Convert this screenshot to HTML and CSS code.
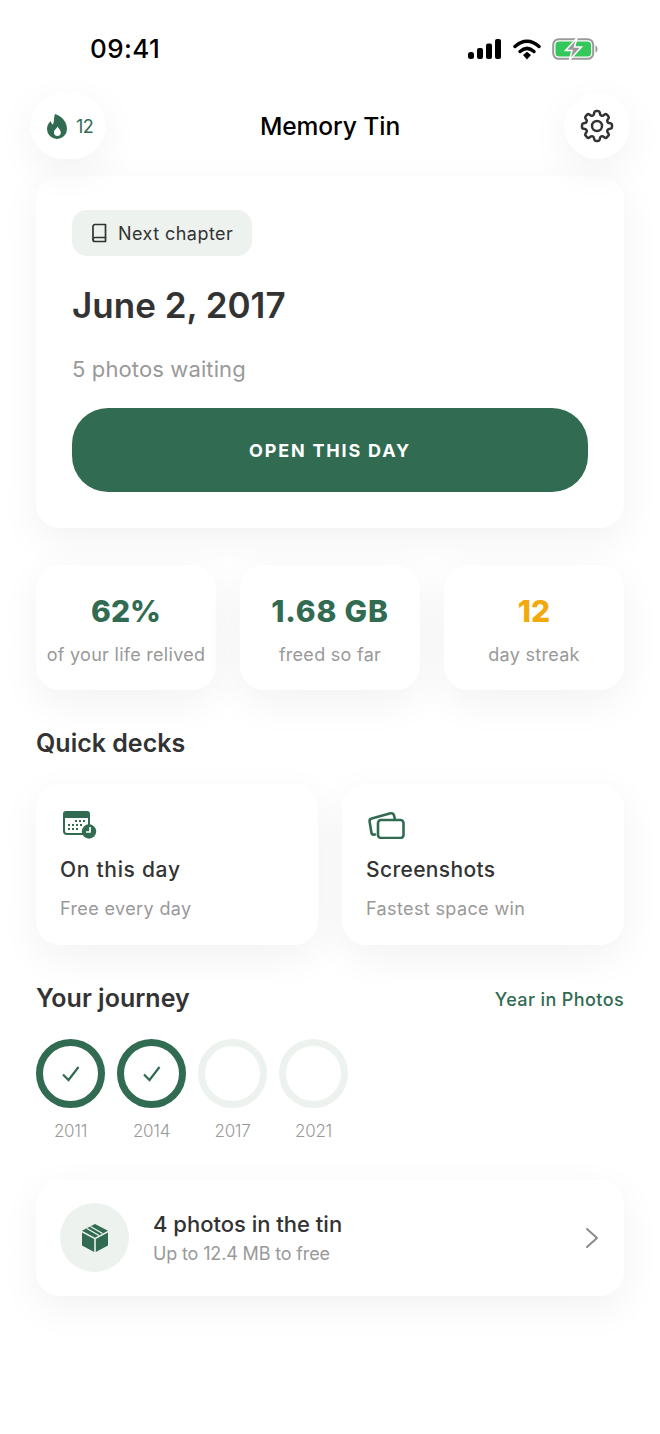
FILE: index.html
```html
<!DOCTYPE html>
<html lang="en">
<head>
<meta charset="utf-8">
<title>Memory Tin</title>
<link rel="stylesheet" href="styles.css">
</head>
<body>
<div class="status">
  <span class="time">09:41</span>
  <div class="status-icons">
    <svg width="34" height="20" viewBox="0 0 34 20"><rect x="0" y="13" width="6" height="7" rx="2.5"/><rect x="9" y="9" width="6" height="11" rx="2"/><rect x="18" y="4.500" width="6" height="15.500" rx="2"/><rect x="27" y="0" width="6" height="20" rx="2"/></svg>
    <svg width="28" height="21" viewBox="0 0 28 21"><path d="M2 7.500C9.500 .5 18.500 .5 26 7.500" fill="none" stroke="#000" stroke-width="3.400" stroke-linecap="round"/><path d="M7 12.500C11.500 8.500 16.500 8.500 21 12.500" fill="none" stroke="#000" stroke-width="3.400" stroke-linecap="round"/><path d="M10 16 14 12.800 18 16 14 20.500Z"/></svg>
    <svg width="46" height="22" viewBox="0 0 46 22"><rect x="1.200" y="1.200" width="40" height="19.600" rx="5.500" fill="none" stroke="#9a9a9a" stroke-width="2"/><rect x="3.500" y="3.500" width="35.500" height="15" rx="3.500" fill="#34c759"/><path d="M43.500 7.500c1.500.5 2 2 2 3.500s-.5 3-2 3.500Z" fill="#9a9a9a"/><path d="M25 0 13.500 12.500H20L17.500 22 29.500 9H22.500Z" fill="#9a9a9a" stroke="#fff" stroke-width="1.500"/></svg>
  </div>
</div>

<header class="topbar">
  <div class="streak">
    <svg width="20" height="25" viewBox="0 0 20 25"><path fill-rule="evenodd" d="M8 0c7 2 12 8 12 15a10 10 0 0 1-20 0c0-4 2-6 3.500-8 .5 1.500 1 3 2.500 3.500C7.500 7 6.500 3.500 8 0ZM10.500 12.500c-.5 2-3.500 3-3.500 6a3.300 3.300 0 0 0 6.800 0c0-2.500-2.300-4-3.300-6Z" fill="#316b52"/></svg>
    <span>12</span>
  </div>
  <h1 class="app-title">Memory Tin</h1>
  <div class="gear">
    <svg width="40" height="40" viewBox="0 0 24 24" fill="none" stroke="#333" stroke-width="1.500" stroke-linecap="round" stroke-linejoin="round"><path d="M10.340 3.940c.09-.54.56-.94 1.110-.94h1.100c.55 0 1.020.4 1.110.94l.15.89c.06.42.37.77.77.93.4.17.85.14 1.200-.1l.74-.53c.44-.32 1.050-.27 1.450.11l.77.78c.39.39.44 1 .12 1.450l-.53.74c-.25.350-.27.800-.1 1.200.16.400.51.710.93.770l.89.150c.54.090.94.560.94 1.110v1.100c0 .55-.4 1.020-.94 1.110l-.89.150c-.42.060-.77.370-.93.770-.17.400-.15.850.1 1.200l.53.740c.32.450.27 1.060-.12 1.450l-.77.780c-.4.380-1.010.43-1.450.11l-.74-.53c-.35-.24-.8-.27-1.200-.1-.4.160-.71.510-.77.930l-.15.890c-.09.540-.56.940-1.110.940h-1.100c-.55 0-1.020-.4-1.110-.94l-.15-.89c-.06-.42-.37-.77-.77-.93-.4-.17-.85-.14-1.200.1l-.74.530c-.44.320-1.050.270-1.450-.11l-.77-.78c-.39-.39-.44-1-.12-1.450l.53-.74c.25-.35.27-.8.1-1.200-.16-.4-.51-.71-.93-.77l-.89-.15C3.400 13.570 3 13.100 3 12.550v-1.100c0-.55.4-1.020.94-1.110l.89-.15c.42-.06.77-.37.93-.77.17-.4.150-.85-.1-1.200l-.53-.74c-.32-.45-.27-1.060.12-1.450l.77-.78c.4-.38 1.010-.43 1.450-.11l.74.530c.35.240.8.270 1.200.1.4-.16.71-.51.770-.93Z"/><circle cx="12" cy="12" r="3"/></svg>
  </div>
</header>

<section class="card hero">
  <div class="badge">
    <svg width="18" height="20" viewBox="0 0 18 20" fill="none" stroke="#333" stroke-width="1.700" stroke-linejoin="round" stroke-linecap="round"><path d="M4 1.500h10.500v13H4a2.200 2.200 0 0 0-2 2V3.500a2 2 0 0 1 2-2Z"/><path d="M2 16.500a2 2 0 0 0 2 2h10.500v-4"/></svg>
    <span>Next chapter</span>
  </div>
  <h2 class="date">June 2, 2017</h2>
  <p class="waiting">5 photos waiting</p>
  <button class="cta">OPEN THIS DAY</button>
</section>

<section class="stats">
  <div class="card stat"><strong class="stat-value">62%</strong><span class="stat-label">of your life relived</span></div>
  <div class="card stat"><strong class="stat-value wide">1.68 GB</strong><span class="stat-label">freed so far</span></div>
  <div class="card stat"><strong class="stat-value orange">12</strong><span class="stat-label">day streak</span></div>
</section>

<h3 class="section-title decks-title">Quick decks</h3>
<section class="decks">
  <div class="card deck">
    <svg class="deck-icon" width="40" height="31" viewBox="0 0 40 31"><path d="M6 3h21a3 3 0 0 1 3 3v4H3V6a3 3 0 0 1 3-3Z" fill="#316b52"/><path d="M4 9h25v9a8 8 0 0 0-6 8H7a3 3 0 0 1-3-3Z" fill="none" stroke="#316b52" stroke-width="2"/><g fill="#316b52"><rect x="15" y="12" width="2" height="2"/><rect x="19" y="12" width="2" height="2"/><rect x="23" y="12" width="2" height="2"/><rect x="8" y="16" width="2" height="2"/><rect x="12" y="16" width="2" height="2"/><rect x="16" y="16" width="2" height="2"/><rect x="20" y="16" width="2" height="2"/><rect x="8" y="20" width="2" height="2"/><rect x="12" y="20" width="2" height="2"/><rect x="16" y="20" width="2" height="2"/></g><circle cx="29" cy="23.500" r="7.200" fill="#316b52"/><path d="M30 19v5h-4" fill="none" stroke="#fff" stroke-width="1.700"/></svg>
    <span class="deck-name day">On this day</span>
    <span class="deck-sub">Free every day</span>
  </div>
  <div class="card deck">
    <svg class="deck-icon" width="40" height="31" viewBox="0 0 40 31" fill="none" stroke="#316b52" stroke-width="2.600" stroke-linejoin="round" stroke-linecap="round"><path d="M9 26.500 8 26.600Q5.800 26.800 5.400 24.500L3.600 13.500Q3.200 11 5.700 10.500L24.500 5.300Q27.300 4.800 28 7.300L29 11.500"/><rect x="12" y="12" width="25.500" height="18" rx="3"/></svg>
    <span class="deck-name">Screenshots</span>
    <span class="deck-sub">Fastest space win</span>
  </div>
</section>

<div class="journey-head">
  <h3 class="section-title">Your journey</h3>
  <a class="year-link">Year in Photos</a>
</div>
<section class="years">
  <div class="year">
    <div class="ring done"><svg width="22" height="18" viewBox="0 0 22 18" fill="none" stroke="#316b52" stroke-width="2.200"><path d="M3 9.500 8.500 15 18.500 2"/></svg></div>
    <span>2011</span>
  </div>
  <div class="year">
    <div class="ring done"><svg width="22" height="18" viewBox="0 0 22 18" fill="none" stroke="#316b52" stroke-width="2.200"><path d="M3 9.500 8.500 15 18.500 2"/></svg></div>
    <span>2014</span>
  </div>
  <div class="year"><div class="ring"></div><span>2017</span></div>
  <div class="year"><div class="ring"></div><span>2021</span></div>
</section>

<section class="card tin">
  <div class="tin-icon">
    <svg width="26" height="28" viewBox="0 0 26 28"><path d="M13 0 26 6.800 13 13.700 0 6.800Z" fill="#316b52"/><path d="M8.500 2.500 20.500 9.500M5 4.500 17 11.500" fill="none" stroke="#edf2ee" stroke-width="1.300"/><path d="M0 8.500 12.200 15V28L0 21.500ZM26 8.500V21.500L13.800 28V15Z" fill="#316b52"/></svg>
  </div>
  <div class="tin-text">
    <span class="tin-title">4 photos in the tin</span>
    <span class="tin-sub">Up to 12.4 MB to free</span>
  </div>
  <svg class="chevron" width="16" height="24" viewBox="0 0 16 24" fill="none" stroke="#8a8a8a" stroke-width="2" stroke-linecap="round" stroke-linejoin="round"><path d="M3 3 13 12 3 21"/></svg>
</section>
</body>
</html>
```
FILE: styles.css
```css
* { box-sizing: border-box; }
html, body { margin: 0; padding: 0; }
body {
  width: 660px;
  min-height: 1434px;
  background: #fff;
  padding: 0 36px;
  font-family: "Inter", "Liberation Sans", sans-serif;
  color: #333;
  overflow: hidden;
}
h1, h2, h3, p { margin: 0; font-weight: inherit; }

.status {
  height: 93px;
  margin: 0 -36px;
  padding: 34px 62px 0 90px;
  display: flex;
  justify-content: space-between;
  align-items: flex-start;
}
.time { font-size: 26px; line-height: 30px; font-weight: 500; color: #000; letter-spacing: .4px; }
.status-icons { display: flex; align-items: center; gap: 11px; padding-top: 4px; }

.topbar {
  height: 66px;
  margin: 0 -6px 17px;
  display: grid;
  grid-template-columns: 1fr auto 1fr;
  align-items: center;
}
.streak, .gear {
  height: 66px;
  background: #fff;
  border-radius: 33px;
  box-shadow: 0 12px 42px rgba(0, 0, 0, .055);
  display: flex;
  align-items: center;
}
.streak { width: 76px; gap: 9px; padding-left: 17px; color: #316b52; font-size: 18px; letter-spacing: -.6px; }
.gear { width: 66px; justify-content: center; justify-self: end; }
.app-title { font-size: 24.600px; font-weight: 500; color: #000; letter-spacing: -.1px; }

.card {
  background: #fff;
  border-radius: 24px;
  box-shadow: 0 12px 42px rgba(0, 0, 0, .055);
}
.hero { height: 352px; padding: 34px 36px 36px; margin-bottom: 37px; }
.badge {
  width: 180px;
  height: 46px;
  border-radius: 15px;
  background: #edf2ee;
  display: flex;
  align-items: center;
  gap: 9px;
  padding-left: 19px;
  font-size: 18px;
  letter-spacing: .45px;
}
.date { margin-top: 28px; font-size: 35px; line-height: 42px; font-weight: 600; }
.waiting { margin-top: 28px; font-size: 22px; line-height: 30px; color: #999; letter-spacing: .12px; }
.cta {
  display: block;
  width: 100%;
  height: 84px;
  margin-top: 24px;
  border: 0;
  border-radius: 36px;
  background: #316b52;
  color: #fff;
  font: 700 18px "Inter", sans-serif;
  letter-spacing: 1.800px;
}

.stats { display: grid; grid-template-columns: repeat(3, 180px); gap: 24px; }
.stat {
  height: 125px;
  display: flex;
  flex-direction: column;
  align-items: center;
  padding-top: 27px;
  border-radius: 24px;
}
.stat-value { font-size: 30px; line-height: 38px; font-weight: 800; color: #316b52; }
.stat-value.wide { letter-spacing: .8px; }
.stat-value.orange { color: #f2a90c; }
.stat-label { margin-top: 13px; font-size: 18px; line-height: 24px; color: #999; white-space: nowrap; letter-spacing: .28px; }

.section-title { font-size: 25px; line-height: 32px; font-weight: 600; }
.decks-title { margin-top: 37px; }
.decks { display: grid; grid-template-columns: repeat(2, 282px); gap: 24px; margin-top: 25px; }
.deck { height: 161px; padding: 24px 24px 0; display: flex; flex-direction: column; }
.deck-icon { display: block; }
.deck-name { margin-top: 16px; font-size: 21px; line-height: 30px; font-weight: 500; letter-spacing: .35px; }
.deck-name.day { letter-spacing: .7px; }
.deck-sub { margin-top: 12px; font-size: 18px; line-height: 24px; color: #999; letter-spacing: .38px; }

.journey-head { display: flex; justify-content: space-between; align-items: center; margin-top: 37px; }
.year-link { font-size: 18px; line-height: 24px; margin-top: 4px; font-weight: 500; color: #316b52; letter-spacing: .4px; }
.years { display: flex; gap: 12px; margin-top: 25px; }
.year { width: 69px; display: flex; flex-direction: column; align-items: center; }
.year span { margin-top: 11px; font-size: 17px; line-height: 24px; color: #999; letter-spacing: -.3px; font-weight: 300; }
.ring {
  width: 69px;
  height: 69px;
  border-radius: 50%;
  border: 7px solid #edf2ee;
  display: flex;
  align-items: center;
  justify-content: center;
}
.ring.done { border-color: #316b52; }

.tin {
  height: 116px;
  margin-top: 37px;
  padding: 0 24px 1px;
  display: flex;
  align-items: center;
}
.tin-icon {
  width: 69px;
  height: 69px;
  border-radius: 50%;
  background: #edf2ee;
  display: flex;
  align-items: center;
  justify-content: center;
}
.tin-text { margin-left: 24px; flex: 1; display: flex; flex-direction: column; padding-top: 2px; }
.tin-title { font-size: 22px; line-height: 30px; font-weight: 500; }
.tin-sub { font-size: 18px; line-height: 30px; color: #999; letter-spacing: -.15px; }
```
